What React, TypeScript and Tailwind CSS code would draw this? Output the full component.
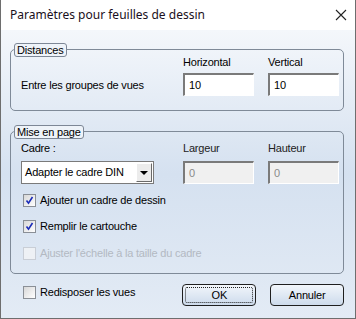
import React from "react";

const font = { fontFamily: '"Liberation Sans", Arial, sans-serif' };

function Check({ checked, disabled }: { checked?: boolean; disabled?: boolean }) {
  return (
    <div
      className={
        "w-[13px] h-[13px] border flex items-center justify-center " +
        (disabled
          ? "border-[#c9ced6] bg-[#eef1f5]"
          : "border-[#8a8f96] bg-gradient-to-br from-[#d8d8d8] to-[#ffffff]")
      }
    >
      {checked && (
        <svg width="9" height="9" viewBox="0 0 9 9">
          <path d="M1.5 4.5 L3.5 7.2 L7.5 1" stroke="#1a2cb8" strokeWidth="1.6" fill="none" />
        </svg>
      )}
    </div>
  );
}

function SunkenInput({ value, disabled }: { value: string; disabled?: boolean }) {
  return (
    <div
      className={
        "h-[23px] w-[71px] border-t-2 border-l-2 border-b border-r flex items-center pl-[4px] text-[11px] " +
        (disabled
          ? "bg-[#f0f0f0] border-t-[#7a7a7a] border-l-[#7a7a7a] border-b-white border-r-white text-[#8a8a8a]"
          : "bg-white border-t-[#7a7a7a] border-l-[#7a7a7a] border-b-white border-r-white text-black")
      }
    >
      {value}
    </div>
  );
}

function Legend({ children }: { children: React.ReactNode }) {
  return (
    <div className="absolute left-[3px] top-[-7px] px-[2px] h-[14px] leading-[12px] text-[11px] text-black border border-[#7d8796] rounded-[3px] bg-[#eef3f9]">
      {children}
    </div>
  );
}

export default function App() {
  return (
    <div
      className="w-[356px] h-[319px] border-l border-r border-b border-[#6e6e6e] flex flex-col"
      style={font}
    >
      <div className="h-[30px] bg-white flex items-center justify-between pl-[9px] pr-[8px]">
        <span className="text-[12px] text-[#1a1020]" style={{ fontFamily: '"Noto Sans", "Liberation Sans", sans-serif' }}>
          Paramètres pour feuilles de dessin
        </span>
        <svg width="12" height="12" viewBox="0 0 12 12">
          <path d="M1 1 L11 11 M11 1 L1 11" stroke="#222" strokeWidth="1.1" />
        </svg>
      </div>
      <div className="flex-1 bg-gradient-to-b from-[#f4f7fb] via-[#d5e1f0] to-[#e3ebf5] pt-[19px] pl-[9px] pr-[11px] text-[11px] tracking-[-0.2px] text-black">
        {/* Distances */}
        <div className="relative border border-[#7f8a98] rounded-[5px] h-[62px] pl-[10px] pt-[5px]">
          <Legend>Distances</Legend>
          <div className="grid grid-cols-[162px_85px_71px] grid-rows-[14px_24px] gap-y-[4px]">
            <div />
            <div className="leading-[14px]">Horizontal</div>
            <div className="leading-[14px]">Vertical</div>
            <div className="flex items-center pt-[1px]">Entre les groupes de vues</div>
            <SunkenInput value="10" />
            <SunkenInput value="10" />
          </div>
        </div>
        {/* Mise en page */}
        <div className="relative mt-[20px] border border-[#7f8a98] rounded-[5px] h-[143px] pl-[10px] pt-[9px]">
          <Legend>Mise en page</Legend>
          <div className="grid grid-cols-[162px_85px_71px] grid-rows-[14px_23px] gap-y-[6px]">
            <div className="leading-[14px]">Cadre :</div>
            <div className="leading-[14px] text-[#222]">Largeur</div>
            <div className="leading-[14px] text-[#222]">Hauteur</div>
            <div className="w-[133px] h-[23px] bg-white border border-[#7a7a7a] flex items-center justify-between pl-[3px] pr-[1px]">
              <span>Adapter le cadre DIN</span>
              <div className="w-[16px] h-[19px] bg-[#ececec] border border-t-white border-l-white border-b-[#6a6a6a] border-r-[#6a6a6a] flex items-center justify-center">
                <svg width="8" height="4" viewBox="0 0 8 4">
                  <path d="M0 0 L8 0 L4 4 Z" fill="#000" />
                </svg>
              </div>
            </div>
            <SunkenInput value="0" disabled />
            <SunkenInput value="0" disabled />
          </div>
          <div className="flex flex-col pl-[2px] mt-[10px] gap-[13px]">
            <div className="flex items-center gap-[4px] h-[13px]">
              <Check checked />
              <span>Ajouter un cadre de dessin</span>
            </div>
            <div className="flex items-center gap-[4px] h-[13px]">
              <Check checked />
              <span>Remplir le cartouche</span>
            </div>
            <div className="flex items-center gap-[4px] h-[14px]">
              <Check disabled />
              <span className="text-[#b3b9c2]">Ajuster l'échelle à la taille du cadre</span>
            </div>
          </div>
        </div>
        {/* bottom row */}
        <div className="flex items-start mt-[10px]">
          <div className="flex items-center gap-[4px] pl-[13px] mt-[2px] h-[13px] w-[173px]">
            <Check />
            <span>Redisposer les vues</span>
          </div>
          <div className="w-[74px] h-[22px] rounded-[4px] border border-[#1f1f1f] bg-gradient-to-b from-[#f2f6fb] to-[#cddbec] p-[2px]">
            <div className="w-full h-full border border-dotted border-[#222] rounded-[2px] flex items-center justify-center">
              OK
            </div>
          </div>
          <div className="ml-[14px] w-[74px] h-[22px] rounded-[4px] border border-[#1f1f1f] bg-gradient-to-b from-[#f2f6fb] to-[#cddbec] flex items-center justify-center">
            Annuler
          </div>
        </div>
      </div>
    </div>
  );
}
